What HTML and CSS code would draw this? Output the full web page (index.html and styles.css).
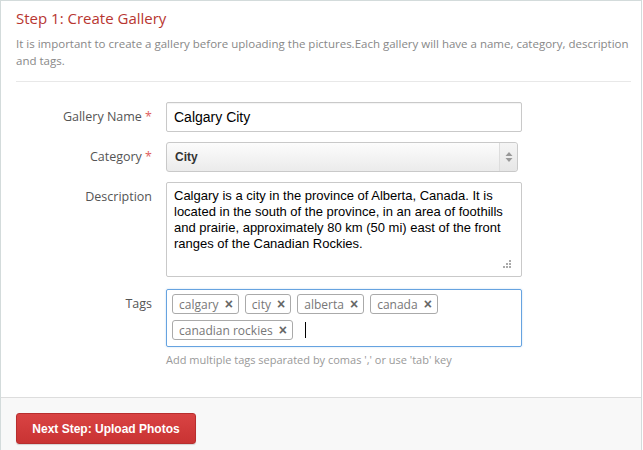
FILE: index.html
```html
<!DOCTYPE html>
<html>
<head>
<meta charset="utf-8">
<link rel="stylesheet" href="styles.css">
</head>
<body>
<div class="panel">
  <div class="head">
    <h2 class="title">Step 1: Create Gallery</h2>
    <p class="intro">It is important to create a gallery before uploading the pictures.Each gallery will have a name, category, description and tags.</p>
    <div class="rule"></div>
  </div>
  <div class="form">
    <div class="row">
      <div class="label">Gallery Name <span class="req">*</span></div>
      <div class="field"><div class="input">Calgary City</div></div>
    </div>
    <div class="row">
      <div class="label">Category <span class="req">*</span></div>
      <div class="field">
        <div class="select"><span class="sel-text">City</span>
          <span class="sel-arrow"><svg width="8" height="12" viewBox="0 0 8 12"><path d="M4 1 L7.5 5 H0.5 Z M4 11 L7.5 7 H0.5 Z" fill="#999"/></svg></span>
        </div>
      </div>
    </div>
    <div class="row">
      <div class="label">Description</div>
      <div class="field">
        <div class="textarea">Calgary is a city in the province of Alberta, Canada. It is located in the south of the province, in an area of foothills and prairie, approximately 80 km (50 mi) east of the front ranges of the Canadian Rockies.
          <svg class="grip" width="9" height="9" viewBox="0 0 9 9"><g fill="#aaa"><rect x="6" y="0" width="2" height="2"/><rect x="3" y="3" width="2" height="2"/><rect x="6" y="3" width="2" height="2"/><rect x="0" y="6" width="2" height="2"/><rect x="3" y="6" width="2" height="2"/><rect x="6" y="6" width="2" height="2"/></g></svg>
        </div>
      </div>
    </div>
    <div class="row row-tags">
      <div class="label">Tags</div>
      <div class="field">
        <div class="tags">
          <span class="tag">calgary <b class="x">×</b></span>
          <span class="tag">city <b class="x">×</b></span>
          <span class="tag">alberta <b class="x">×</b></span>
          <span class="tag">canada <b class="x">×</b></span>
          <span class="tag">canadian rockies <b class="x">×</b></span>
          <span class="caret"></span>
        </div>
        <div class="help">Add multiple tags separated by comas ',' or use 'tab' key</div>
      </div>
    </div>
  </div>
  <div class="foot">
    <button class="btn">Next Step: Upload Photos</button>
  </div>
</div>
</body>
</html>
```
FILE: styles.css
```css
html, body { margin: 0; padding: 0; height: 450px; overflow: hidden; background: #fff; }
body { font-family: "Open Sans", "Segoe UI", sans-serif; }
.panel { border: 1px solid #d3dbdb; border-bottom: none; margin-right: 1px; background: #fff; height: 480px; display: flex; flex-direction: column; }
.head { padding: 5px 10px 0 15px; }
.title { margin: 0; font-weight: 400; font-size: 15px; line-height: 24px; color: #b83631; }
.intro { margin: 5px 0 0; font-size: 11.5px; line-height: 17px; color: #888; }
.rule { height: 1px; background: #e8e8e8; margin-top: 12px; }
.form { padding: 20px 0 0; }
.row { display: grid; grid-template-columns: 151px 356px; column-gap: 14px; margin-bottom: 10px; }
.label { text-align: right; font-size: 12.5px; color: #555; line-height: 30px; }
.req { color: #e06060; }
.input { border: 1px solid #c9c9c9; border-radius: 2px; box-sizing: border-box; height: 30px; padding: 0 7px; font: 14px/28px "Liberation Sans", Arial, sans-serif; color: #000; box-shadow: inset 0 1px 1px rgba(0,0,0,.05); }
.select { position: relative; height: 30px; box-sizing: border-box; width: 352px; border: 1px solid #c9c9c9; border-radius: 3px; background: linear-gradient(#fcfcfc, #ebebeb); font: bold 12px/28px "Liberation Sans", Arial, sans-serif; color: #333; padding-left: 8px; display: flex; justify-content: space-between; }
.sel-arrow { width: 17px; border-left: 1px solid #ddd; display: flex; align-items: center; justify-content: center; background: linear-gradient(#f4f4f4, #e6e6e6); border-radius: 0 3px 3px 0; }
.textarea { position: relative; height: 95px; box-sizing: border-box; border: 1px solid #c9c9c9; border-radius: 2px; padding: 5px 7px; font: 13px/16px "Liberation Sans", Arial, sans-serif; color: #000; white-space: normal; }
.grip { position: absolute; right: 9px; bottom: 7px; }
.row-tags { margin-top: 12px; }
.tags { height: 58px; box-sizing: border-box; border: 1px solid #66a3e0; border-radius: 2px; box-shadow: 0 0 2px rgba(102,163,224,.4); padding: 4px 5px; display: flex; flex-wrap: wrap; align-content: flex-start; gap: 6px 6px; }
.tag { height: 20px; box-sizing: border-box; border: 1px solid #aaa; border-radius: 3px; padding: 0 5px 0 6px; font-size: 12px; line-height: 18px; color: #777; background: #fff; }
.x { font-family: "Liberation Sans", Arial, sans-serif; font-size: 14px; color: #666; font-weight: bold; margin-left: 3px; }
.caret { width: 1px; height: 16px; background: #000; margin: 2px 0 0 6px; }
.help { font-size: 11px; color: #999; margin-top: 5px; line-height: 16px; }
.foot { margin-top: 19px; flex: 1; background: #f8f8f8; border-top: 1px solid #ddd; padding: 15px 15px; }
.btn { width: 180px; height: 31px; border: 1px solid #b82e2e; border-radius: 3px; background: linear-gradient(#d94343, #c93333); color: #fff; font: bold 12px "Liberation Sans", Arial, sans-serif; box-shadow: 0 1px 1px rgba(0,0,0,.15); }
```
